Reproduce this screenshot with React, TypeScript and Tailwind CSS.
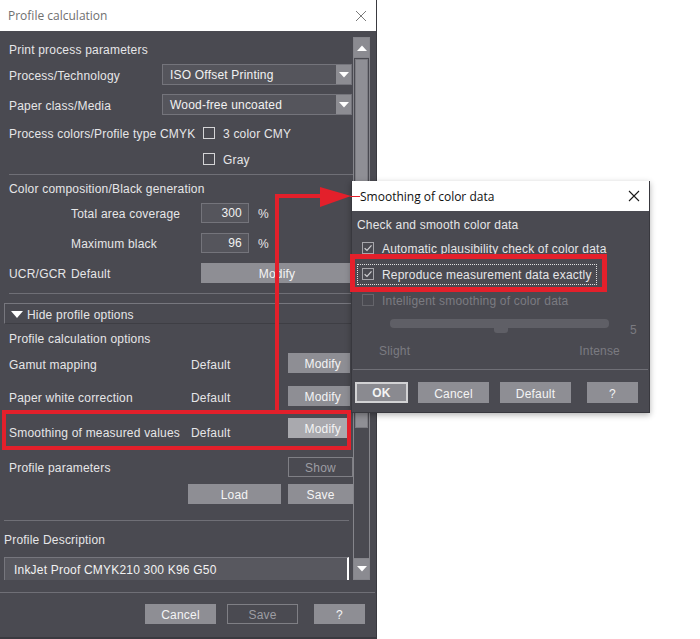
import React from 'react'

type Children = { children?: React.ReactNode; className?: string }

function TriDown({ className = '' }: { className?: string }) {
  return (
    <svg width="10" height="6" viewBox="0 0 10 6" className={className}>
      <polygon points="0,0 10,0 5,5.5" fill="#ffffff" />
    </svg>
  )
}

function TriUp() {
  return (
    <svg width="10" height="6" viewBox="0 0 10 6">
      <polygon points="0,6 10,6 5,0.5" fill="#ffffff" />
    </svg>
  )
}

function Check({
  checked = false,
  disabled = false,
  light = false,
}: {
  checked?: boolean
  disabled?: boolean
  light?: boolean
}) {
  return (
    <span
      className={`flex h-[12px] w-[12px] shrink-0 items-center justify-center border ${
        disabled
          ? 'border-[#65656b]'
          : light
            ? 'border-[#d4d4d6]'
            : 'border-[#a6a6ab]'
      }`}
    >
      {checked && (
        <svg width="10" height="10" viewBox="0 0 10 10">
          <path
            d="M1.6 5.2 L4 7.5 L8.5 2.3"
            fill="none"
            stroke="#cfcfd2"
            strokeWidth="1.2"
          />
        </svg>
      )}
    </span>
  )
}

function Dropdown({ value }: { value: string }) {
  return (
    <div className="flex h-[21px] w-[190px] border border-[#74747b] bg-[#55555c]">
      <span className="flex-1 pl-[7px] pt-px leading-[19px] text-[#f2f2f2]">{value}</span>
      <span className="flex w-[15px] items-center justify-center bg-[#8c8c92]">
        <TriDown />
      </span>
    </div>
  )
}

function Btn({ children, className = '' }: Children) {
  return (
    <div
      className={`flex h-[20px] items-center justify-center bg-[#8e8e94] pt-[2px] text-[#f4f4f4] ${className}`}
    >
      {children}
    </div>
  )
}

function Field({ value }: { value: string }) {
  return (
    <div className="h-[20px] w-[48px] border border-[#74747b] bg-[#55555c] pr-[6px] text-right leading-[19px] text-[#f2f2f2]">
      {value}
    </div>
  )
}

function Row({ children, className = '' }: Children) {
  return <div className={`flex h-[20px] items-center ${className}`}>{children}</div>
}

function Label({ children, className = '' }: Children) {
  return <span className={`pt-[2px] ${className}`}>{children}</span>
}

function Scrollbar() {
  return (
    <div className="mt-[6px] flex h-[543px] w-[17px] flex-col">
      <div className="flex h-[21px] items-center justify-center border border-[#85858b] bg-[#8b8b91]">
        <TriUp />
      </div>
      <div className="flex flex-1 flex-col border-x border-[#85858b] pt-px">
        <div className="mx-px h-[369px] border border-[#7b7b81] bg-[#8f8f95]" />
        <div className="flex-1" />
      </div>
      <div className="flex h-[22px] items-center justify-center border border-[#85858b] bg-[#8b8b91]">
        <TriDown />
      </div>
    </div>
  )
}

function ProfileCalculation() {
  return (
    <div className="flex h-[639px] w-[377px] flex-col border-r border-b-2 border-[#3a3a40] bg-[#4a4a51] text-[12px] tracking-[0.2px] text-[#e6e6e8]">
      <div className="flex h-[31px] shrink-0 items-center justify-between bg-white pl-[8px] pr-[9px] font-['Open_Sans',sans-serif] text-[12px] tracking-normal text-[#6f6f6f]">
        <span className="pt-px">Profile calculation</span>
        <svg width="12" height="12" viewBox="0 0 12 12">
          <path d="M1 1 L11 11 M11 1 L1 11" stroke="#7a7a7a" strokeWidth="1" />
        </svg>
      </div>

      <div className="flex h-[549px] shrink-0">
        <div className="flex w-[353px] flex-col pt-[7px]">
          <div className="flex h-[22px] items-center pl-[9px]">
            <Label>Print process parameters</Label>
          </div>
          <div className="mt-[4px] flex h-[21px] items-center pl-[9px]">
            <Label className="w-[153px]">Process/Technology</Label>
            <Dropdown value="ISO Offset Printing" />
          </div>
          <div className="mt-[9px] flex h-[21px] items-center pl-[9px]">
            <Label className="w-[153px]">Paper class/Media</Label>
            <Dropdown value="Wood-free uncoated" />
          </div>
          <Row className="mt-[8px] pl-[9px]">
            <Label className="w-[151px]">Process colors/Profile type</Label>
            <Label className="w-[43px]">CMYK</Label>
            <Check light />
            <Label className="ml-[8px]">3 color CMY</Label>
          </Row>
          <Row className="mt-[6px] pl-[203px]">
            <Check light />
            <Label className="ml-[8px]">Gray</Label>
          </Row>
          <div className="ml-[9px] mt-[5px] h-px bg-[#6f6f76]" />
          <Row className="mt-[3px] pl-[9px]">
            <Label>Color composition/Black generation</Label>
          </Row>
          <Row className="mt-[5px] pl-[71px]">
            <Label className="w-[130px]">Total area coverage</Label>
            <Field value="300" />
            <Label className="ml-[9px]">%</Label>
          </Row>
          <Row className="mt-[10px] pl-[71px]">
            <Label className="w-[130px]">Maximum black</Label>
            <Field value="96" />
            <Label className="ml-[9px]">%</Label>
          </Row>
          <Row className="mt-[10px] pl-[9px]">
            <Label className="w-[62px]">UCR/GCR</Label>
            <Label className="w-[130px]">Default</Label>
            <Btn className="w-[152px]">Modify</Btn>
          </Row>
          <div className="ml-[9px] mt-[10px] h-px bg-[#6f6f76]" />
          <div className="ml-[4px] mt-[9px] flex h-[21px] items-center border-t border-l border-b border-t-[#77777e] border-l-[#77777e] border-b-[#3e3e44] pl-[6px] pt-[3px]">
            <svg width="12" height="8" viewBox="0 0 12 8">
              <polygon points="0,0 12,0 6,7" fill="#ffffff" />
            </svg>
            <span className="ml-[4px]">Hide profile options</span>
          </div>
          <Row className="mt-[4px] pl-[9px]">
            <Label>Profile calculation options</Label>
          </Row>
          <Row className="mt-[5px] pl-[9px]">
            <span className="w-[182px] pt-[4px]">Gamut mapping</span>
            <span className="w-[97px] pt-[4px]">Default</span>
            <Btn className="w-[62px] justify-end pr-[9px]">Modify</Btn>
          </Row>
          <Row className="mt-[13px] pl-[9px]">
            <span className="w-[182px] pt-[3px]">Paper white correction</span>
            <span className="w-[97px] pt-[3px]">Default</span>
            <Btn className="w-[62px] justify-end pr-[9px]">Modify</Btn>
          </Row>
          <Row className="mt-[12px] pl-[9px]">
            <span className="w-[182px] pt-[9px]">Smoothing of measured values</span>
            <span className="w-[97px] pt-[9px]">Default</span>
            <Btn className="w-[62px] justify-end bg-[#a9a9ae] pr-[9px]">Modify</Btn>
          </Row>
          <Row className="mt-[19px] pl-[9px]">
            <Label className="w-[279px]">Profile parameters</Label>
            <div className="flex h-[20px] w-[65px] items-center justify-center border border-[#7f7f85] pt-[2px] text-[#9d9da3]">
              Show
            </div>
          </Row>
          <Row className="mt-[7px] pl-[188px]">
            <Btn className="w-[93px]">Load</Btn>
            <Btn className="ml-[7px] w-[65px]">Save</Btn>
          </Row>
          <div className="ml-[4px] mr-[4px] mt-[16px] h-px bg-[#6f6f76]" />
          <Row className="mt-[8px] pl-[4px]">
            <Label>Profile Description</Label>
          </Row>
          <div className="ml-[4px] mt-[8px] flex h-[23px] w-[345px] items-center border-t border-l border-r-2 border-t-[#76767d] border-l-[#76767d] border-r-white bg-[#58585f] pl-[9px] pt-[2px] text-[#f2f2f2]">
            InkJet Proof CMYK210 300 K96 G50
          </div>
        </div>
        <Scrollbar />
      </div>

      <div className="mt-[12px] h-px w-[375px] bg-[#6f6f76]" />
      <div className="mt-[11px] flex h-[20px] pl-[145px]">
        <Btn className="w-[71px]">Cancel</Btn>
        <div className="ml-[11px] flex h-[20px] w-[71px] items-center justify-center border border-[#7f7f85] pt-[2px] text-[#9d9da3]">
          Save
        </div>
        <Btn className="ml-[16px] w-[51px]">?</Btn>
      </div>
    </div>
  )
}

function SmoothingDialog() {
  return (
    <div className="absolute left-[351px] top-[181px] flex h-[232px] w-[299px] flex-col border-x border-b border-[#38383e] bg-[#4a4a51] text-[12px] tracking-[0.2px] text-[#e6e6e8] shadow-[0_2px_6px_rgba(0,0,0,0.3)]">
      <div className="flex h-[30px] shrink-0 items-center justify-between bg-white pl-[8px] pr-[9px] font-['Open_Sans',sans-serif] text-[12px] tracking-normal text-[#111111]">
        <span className="pt-px">Smoothing of color data</span>
        <svg width="12" height="12" viewBox="0 0 12 12">
          <path d="M1 1 L11 11 M11 1 L1 11" stroke="#1a1a1a" strokeWidth="1.1" />
        </svg>
      </div>
      <Row className="mt-[3px] pl-[5px]">
        <Label>Check and smooth color data</Label>
      </Row>
      <Row className="mt-[4px] pl-[10px]">
        <Check checked />
        <Label className="ml-[8px]">Automatic plausibility check of color data</Label>
      </Row>
      <Row className="mt-[6px] pl-[5px]">
        <div className="flex h-[21px] w-[240px] items-center border border-dotted border-[#e0e0e0] pl-[4px]">
          <Check checked />
          <Label className="ml-[8px]">Reproduce measurement data exactly</Label>
        </div>
      </Row>
      <Row className="mt-[6px] pl-[10px] text-[#7b7b81]">
        <Check disabled />
        <Label className="ml-[8px]">Intelligent smoothing of color data</Label>
      </Row>
      <div className="mt-[6px] flex h-[20px] items-start pl-[38px] pt-[3px]">
        <div className="relative h-[9px] w-[219px] rounded-[4px] bg-[#5f5f66]">
          <div className="absolute left-[104px] top-0 h-[14px] w-[14px] rounded-b-[3px] bg-[#5f5f66]" />
        </div>
        <span className="ml-[21px] mt-[2px] text-[#7b7b81]">5</span>
      </div>
      <Row className="mt-[4px] justify-between pl-[27px] pr-[29px] text-[#7b7b81]">
        <Label>Slight</Label>
        <Label>Intense</Label>
      </Row>
      <div className="mx-px mt-[9px] h-px bg-[#6f6f76]" />
      <div className="mt-[12px] flex h-[21px] pl-[3px]">
        <div className="flex h-[21px] w-[53px] items-center justify-center border-2 border-[#d2d2d4] bg-[#8a8a90] pt-px font-bold text-[#f4f4f4]">
          OK
        </div>
        <Btn className="ml-[10px] h-[21px] w-[71px]">Cancel</Btn>
        <Btn className="ml-[11px] h-[21px] w-[71px]">Default</Btn>
        <Btn className="ml-[16px] h-[21px] w-[51px]">?</Btn>
      </div>
    </div>
  )
}

function Annotations() {
  return (
    <>
      <div className="absolute left-[2px] top-[410px] h-[40px] w-[349px] border-[4px] border-[#e3202b]" />
      <div className="absolute left-[350px] top-[254px] h-[38px] w-[257px] border-[5px] border-[#e3202b]" />
      <div className="absolute left-[275px] top-[194px] h-[216px] w-[4px] bg-[#e3202b]" />
      <div className="absolute left-[275px] top-[194px] h-[4px] w-[48px] bg-[#e3202b]" />
      <svg
        className="absolute left-[320px] top-[186px]"
        width="40"
        height="22"
        viewBox="0 0 40 22"
      >
        <polygon points="0,1 31,10 0,21" fill="#e3202b" />
        <line x1="30" y1="10.5" x2="40" y2="10.5" stroke="#e3202b" strokeWidth="1" />
      </svg>
    </>
  )
}

export default function App() {
  return (
    <div className="relative h-[639px] w-[700px] overflow-hidden bg-white font-['Liberation_Sans',Arial,sans-serif]">
      <ProfileCalculation />
      <SmoothingDialog />
      <Annotations />
    </div>
  )
}
